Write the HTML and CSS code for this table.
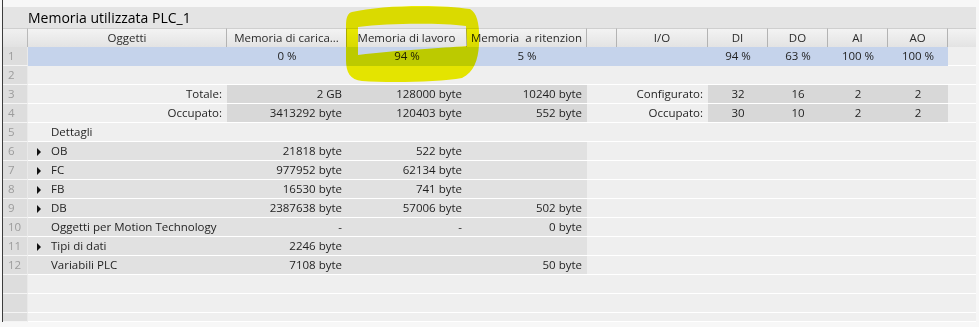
FILE: index.html
```html
<!DOCTYPE html>
<html>
<head>
<meta charset="utf-8">
<link rel="stylesheet" href="styles.css">
</head>
<body>
<div class="frame">
  <div class="title-row"><span class="title">Memoria utilizzata PLC_1</span></div>
  <div class="row head">
    <div class="num"></div>
    <div class="hc">Oggetti</div>
    <div class="hc">Memoria di carica...</div>
    <div class="hc">Memoria di lavoro</div>
    <div class="hc">Memoria&nbsp; a ritenzion</div>
    <div class="hc"></div>
    <div class="hc">I/O</div>
    <div class="hc">DI</div>
    <div class="hc">DO</div>
    <div class="hc">AI</div>
    <div class="hc">AO</div>
    <div class="hc last"></div>
  </div>
  <div class="row">
    <div class="num">1</div>
    <div class="c blue"></div>
    <div class="c blue ctr">0 %</div>
    <div class="c blue ctr">94 %</div>
    <div class="c blue ctr">5 %</div>
    <div class="c blue"></div>
    <div class="c blue"></div>
    <div class="c blue ctr">94 %</div>
    <div class="c blue ctr">63 %</div>
    <div class="c blue ctr">100 %</div>
    <div class="c blue ctr">100 %</div>
    <div class="c"></div>
  </div>
  <div class="row">
    <div class="num">2</div>
    <div class="c span11"></div>
  </div>
  <div class="row">
    <div class="num">3</div>
    <div class="c rt">Totale:</div>
    <div class="c g rt">2 GB</div>
    <div class="c g rt">128000 byte</div>
    <div class="c g rt">10240 byte</div>
    <div class="c rt span2">Configurato:</div>
    <div class="c g ctr">32</div>
    <div class="c g ctr">16</div>
    <div class="c g ctr">2</div>
    <div class="c g ctr">2</div>
    <div class="c"></div>
  </div>
  <div class="row">
    <div class="num">4</div>
    <div class="c rt">Occupato:</div>
    <div class="c g rt">3413292 byte</div>
    <div class="c g rt">120403 byte</div>
    <div class="c g rt">552 byte</div>
    <div class="c rt span2">Occupato:</div>
    <div class="c g ctr">30</div>
    <div class="c g ctr">10</div>
    <div class="c g ctr">2</div>
    <div class="c g ctr">2</div>
    <div class="c"></div>
  </div>
  <div class="row">
    <div class="num">5</div>
    <div class="c name">Dettagli</div>
    <div class="c span10"></div>
  </div>
  <div class="row">
    <div class="num">6</div>
    <div class="c gl name"><span class="tri"></span>OB</div>
    <div class="c gl rt">21818 byte</div>
    <div class="c gl rt">522 byte</div>
    <div class="c gl rt"></div>
    <div class="c span7"></div>
  </div>
  <div class="row">
    <div class="num">7</div>
    <div class="c gl name"><span class="tri"></span>FC</div>
    <div class="c gl rt">977952 byte</div>
    <div class="c gl rt">62134 byte</div>
    <div class="c gl rt"></div>
    <div class="c span7"></div>
  </div>
  <div class="row">
    <div class="num">8</div>
    <div class="c gl name"><span class="tri"></span>FB</div>
    <div class="c gl rt">16530 byte</div>
    <div class="c gl rt">741 byte</div>
    <div class="c gl rt"></div>
    <div class="c span7"></div>
  </div>
  <div class="row">
    <div class="num">9</div>
    <div class="c gl name"><span class="tri"></span>DB</div>
    <div class="c gl rt">2387638 byte</div>
    <div class="c gl rt">57006 byte</div>
    <div class="c gl rt">502 byte</div>
    <div class="c span7"></div>
  </div>
  <div class="row">
    <div class="num">10</div>
    <div class="c gl name">Oggetti per Motion Technology</div>
    <div class="c gl rt">-</div>
    <div class="c gl rt">-</div>
    <div class="c gl rt">0 byte</div>
    <div class="c span7"></div>
  </div>
  <div class="row">
    <div class="num">11</div>
    <div class="c gl name"><span class="tri"></span>Tipi di dati</div>
    <div class="c gl rt">2246 byte</div>
    <div class="c gl rt"></div>
    <div class="c gl rt"></div>
    <div class="c span7"></div>
  </div>
  <div class="row">
    <div class="num">12</div>
    <div class="c gl name">Variabili PLC</div>
    <div class="c gl rt">7108 byte</div>
    <div class="c gl rt"></div>
    <div class="c gl rt">50 byte</div>
    <div class="c span7"></div>
  </div>
  <div class="row"><div class="num"></div><div class="c span11"></div></div>
  <div class="row"><div class="num"></div><div class="c span11"></div></div>
  <div class="row short"><div class="num"></div><div class="c span11"></div></div>
</div>
<svg class="marker" width="979" height="327" viewBox="0 0 979 327">
  <path fill-rule="evenodd" d="M352 12 C380 5 440 4 470 9 C478 13 480 28 479 45 C478 60 474 72 462 78 C440 82 390 83 362 81 C350 80 346 72 346 60 L346 25 C346 17 348 13 352 12 Z M358 27 C390 23 440 23 466 26 L467 46 C440 48 400 50 358 55 Z"/>
</svg>
</body>
</html>
```

FILE: styles.css
```css
html, body {
  margin: 0;
  padding: 0;
  background: #f7f7f7;
}
body {
  width: 979px;
  height: 327px;
  overflow: hidden;
  position: relative;
  font-family: "Open Sans", "Noto Sans", sans-serif;
  font-size: 11.5px;
  color: #1f1f1f;
}
.frame {
  margin-left: 2px;
  border-left: 1px solid #3c3c3c;
  width: 973px;
  padding-top: 7px;
  height: 315px;
  overflow: hidden;
}
.title-row {
  height: 21px;
  background: #e4e4e4;
  display: flex;
  align-items: center;
  padding-left: 25px;
}
.title {
  font-size: 14px;
  color: #000;
  font-weight: 500;
}
.row {
  display: grid;
  grid-template-columns: 25px 199px 120px 120px 120px 30px 91px 60px 60px 60px 60px 1fr;
  height: 19px;
}
.row.short { height: 9px; }
.num {
  background: #dddddd;
  color: #9c9c9c;
  border-bottom: 1px solid #f4f4f4;
  border-right: 1px solid #e9e9e9;
  padding-left: 5px;
  line-height: 18px;
}
.head .num {
  background: linear-gradient(#f0f0f0, #e2e2e2);
  border-top: 1px solid #cfcfcf;
  border-right: 1px solid #b9b9b9;
  border-bottom: 0;
}
.hc {
  background: linear-gradient(#f3f3f3, #e3e3e3);
  border-top: 1px solid #cfcfcf;
  border-right: 1px solid #b3b3b3;
  text-align: center;
  line-height: 18px;
  white-space: nowrap;
  overflow: hidden;
  color: #2a2a2a;
}
.hc.last { border-right: 0; }
.c {
  background: #efefef;
  border-bottom: 1px solid #ffffff;
  line-height: 18px;
  white-space: nowrap;
  overflow: hidden;
}
.c.blue { background: #c5d3eb; border-bottom-color: #c5d3eb; }
.c.g { background: #d8d8d8; }
.c.gl { background: #e1e1e1; }
.rt { text-align: right; padding-right: 5px; }
.ctr { text-align: center; }
.name { padding-left: 23px; position: relative; }
.tri {
  position: absolute;
  left: 9px;
  top: 6px;
  width: 0;
  height: 0;
  border-left: 4px solid #111;
  border-top: 4px solid transparent;
  border-bottom: 4px solid transparent;
}
.span2 { grid-column: span 2; }
.span7 { grid-column: span 7; }
.span10 { grid-column: span 10; }
.span11 { grid-column: span 11; }
.marker {
  position: absolute;
  left: 0;
  top: 0;
  pointer-events: none;
  mix-blend-mode: multiply;
  fill: #f4f400;
}
```
